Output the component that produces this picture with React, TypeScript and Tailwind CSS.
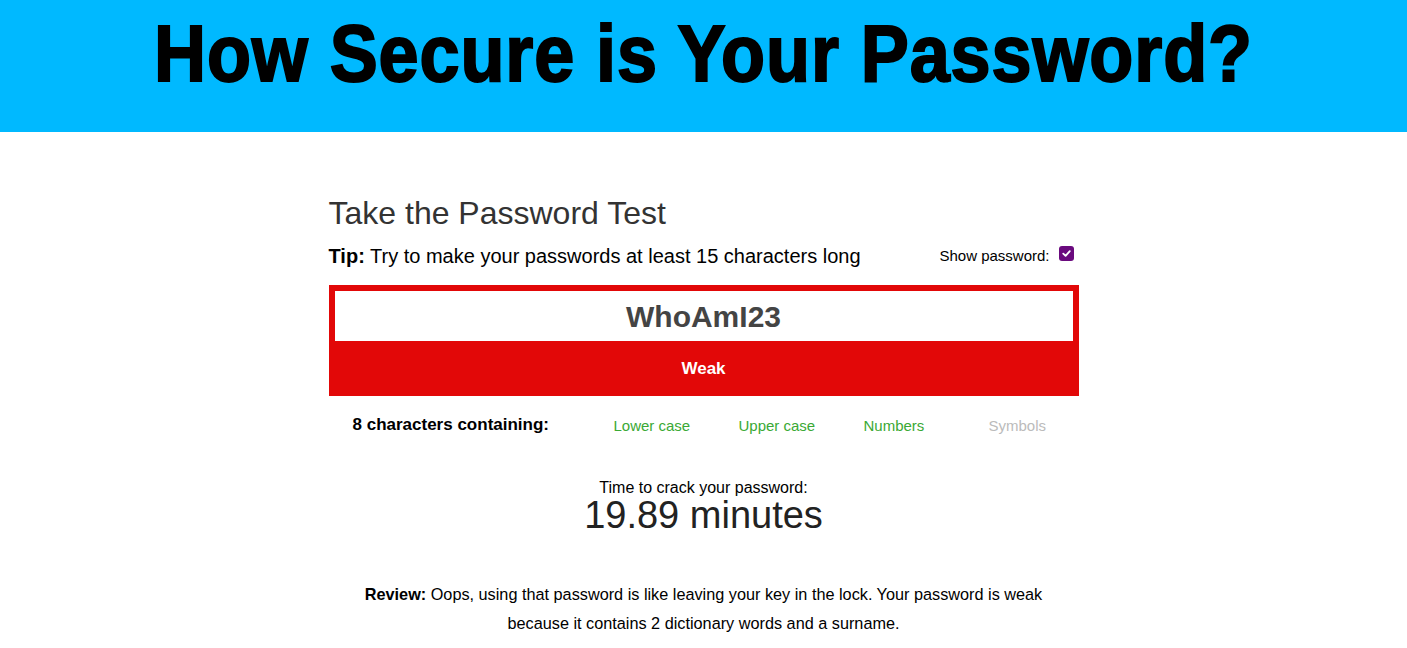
import React from 'react';

const checks = [
  { label: 'Lower case', on: true },
  { label: 'Upper case', on: true },
  { label: 'Numbers', on: true },
  { label: 'Symbols', on: false },
];

export default function App() {
  return (
    <div className="min-h-screen bg-white font-['Liberation_Sans',Arial,sans-serif] text-[#333]">
      {/* Banner */}
      <div className="h-[132px] bg-[#00b9ff] flex items-center justify-center">
        <h1 className="text-[80px] leading-none font-black text-black tracking-[1px] pb-[24px] scale-x-[0.9] whitespace-nowrap [-webkit-text-stroke:2px_black]">
          How Secure is Your Password?
        </h1>
      </div>

      {/* Test */}
      <div className="w-[750px] mx-auto pt-[61px]">
        <h2 className="text-[32px] leading-[40px] text-[#333]">Take the Password Test</h2>
        <div className="flex items-center justify-between mt-[9px]">
          <p className="text-[20px] leading-[28px] text-black">
            <span className="font-bold">Tip:</span> Try to make your passwords at least 15 characters long
          </p>
          <label className="flex items-center gap-[9px] text-[15px] text-black pr-[5px]">
            Show password:
            <span className="w-[15px] h-[15px] rounded-[3px] bg-[#6a0a7e] flex items-center justify-center -mt-[5px]">
              <svg width="11" height="11" viewBox="0 0 12 12" fill="none">
                <path d="M2.5 6.2 L5 8.6 L9.6 3.4" stroke="white" strokeWidth="2" strokeLinecap="round" strokeLinejoin="round" />
              </svg>
            </span>
          </label>
        </div>

        <div className="mt-[15px] bg-[#e20808] px-[6px] pt-[6px]">
          <div className="h-[50px] bg-white flex items-center justify-center text-[30px] font-bold text-[#444]">
            WhoAmI23
          </div>
          <div className="h-[55px] flex items-center justify-center text-[17px] font-bold text-white">Weak</div>
        </div>

        <div className="flex items-center mt-[18px] h-[21px]">
          <div className="w-[265px] pl-[24px] text-[17px] font-bold text-black">8 characters containing:</div>
          <div className="flex mt-[3px]">
            {checks.map((c) => (
              <span
                key={c.label}
                className={`w-[125px] pl-[35px] text-[15px] ${c.on ? 'text-[#3aa935]' : 'text-[#bbbbbb]'}`}
              >
                {c.label}
              </span>
            ))}
          </div>
        </div>

        <div className="mt-[44px] text-center">
          <p className="text-[16px] leading-[18px] text-black">Time to crack your password:</p>
          <p className="text-[38px] leading-[37px] text-[#222]">19.89 minutes</p>
        </div>

        <p className="mt-[46px] text-center text-[16.25px] leading-[29px] text-black">
          <span className="font-bold">Review:</span> Oops, using that password is like leaving your key in the lock. Your password is weak
          <br />
          because it contains 2 dictionary words and a surname.
        </p>
      </div>
    </div>
  );
}
